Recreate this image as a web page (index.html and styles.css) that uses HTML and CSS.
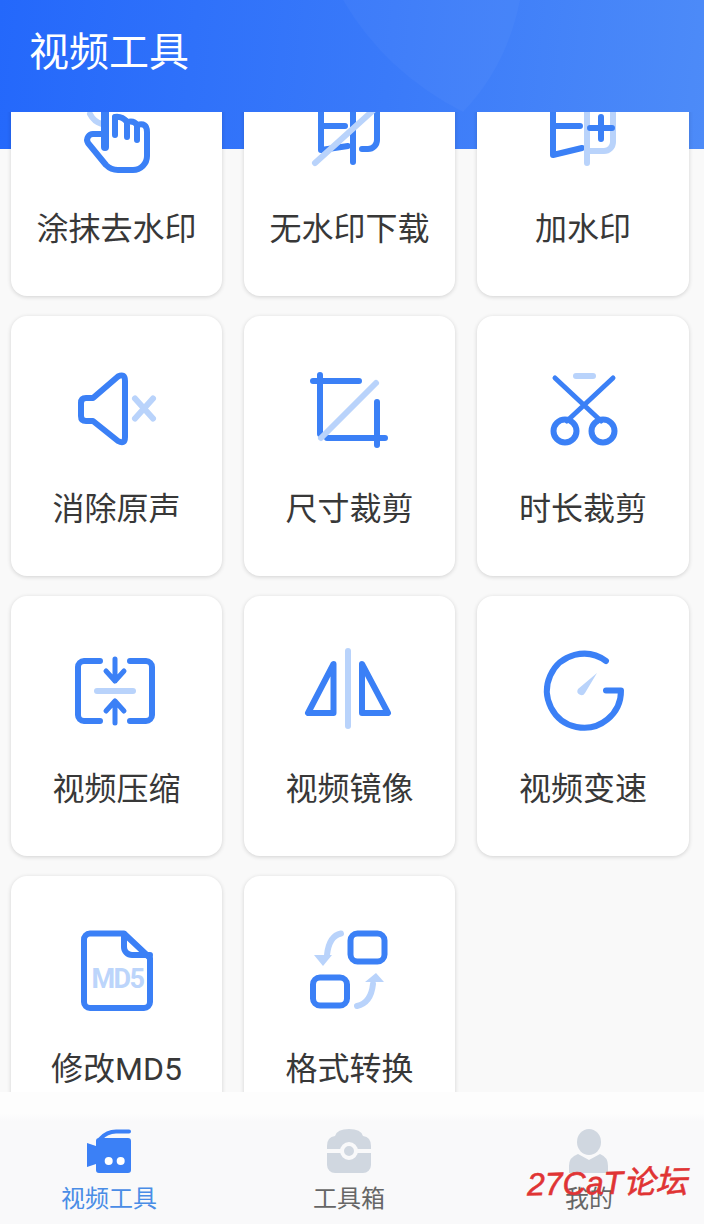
FILE: index.html
```html
<!DOCTYPE html>
<html lang="zh-CN">
<head>
<meta charset="utf-8">
<title>视频工具</title>
<link rel="stylesheet" href="styles.css">
</head>
<body>
<div class="screen">
  <header class="topbar">
    <svg class="topbar-shape" viewBox="0 0 704 112" aria-hidden="true"><path class="shape-fill" d="M343 0Q385 72 463 112Q507 66 520 0Z"/></svg>
    <h1 class="title">视频工具</h1>
  </header>
  <main class="content">
    <div class="grid">
      <a class="card">
        <svg class="icon" viewBox="77 89 80 80">
          <path class="l" d="M90 114Q94 122 102 124" />
          <path class="s" d="M104 134H94a6 6 0 0 0-6 9L106 165q5 5 12 5H133a14 14 0 0 0 14-14V132Q147 122 137 125Q134 120 127 122Q122 116 115 117M115 117V135M127 122V137M137 125V140"/>
          <path class="s thick" d="M105 100V147"/>
        </svg>
        <span class="label">涂抹去水印</span>
      </a>
      <a class="card">
        <svg class="icon" viewBox="310 89 80 80">
          <path class="s" d="M321 90V150L348 146M321 126H345M353 90V162M377 90V140a9 9 0 0 1-9 9H362"/>
          <path class="l" d="M315 163L378 106"/>
        </svg>
        <span class="label">无水印下载</span>
      </a>
      <a class="card">
        <svg class="icon" viewBox="543 89 80 80">
          <path class="s" d="M553 90V155L582 148M553 126H580"/>
          <path class="l" d="M587 90V163M613 90V142a9 9 0 0 1-9 9H590"/>
          <path class="s" d="M590 128H612M601 117V139"/>
        </svg>
        <span class="label">加水印</span>
      </a>
      <a class="card">
        <svg class="icon" viewBox="77 369 80 80">
          <path class="s" d="M118 376.500Q125 373 125 381V437Q125 445 118 441L93 421H86Q81 421 81 416V403Q81 398 86 398H93Z"/>
          <path class="l" d="M135 398.500L153 418.500M153 398.500L135 418.500"/>
        </svg>
        <span class="label">消除原声</span>
      </a>
      <a class="card">
        <svg class="icon" viewBox="310 369 80 80">
          <path class="s" d="M320 375V434M313 381H359M377 402V445M327 438H385"/>
          <path class="l" d="M321 438L376 383"/>
        </svg>
        <span class="label">尺寸裁剪</span>
      </a>
      <a class="card">
        <svg class="icon" viewBox="543 369 80 80">
          <path class="s t" d="M555 378L601 421M613 378L567 421"/>
          <circle class="s" cx="565" cy="431" r="11.500"/>
          <circle class="s" cx="603" cy="431" r="11.500"/>
          <path class="l" d="M576 376H593"/>
        </svg>
        <span class="label">时长裁剪</span>
      </a>
      <a class="card">
        <svg class="icon" viewBox="77 649 80 80">
          <path class="s" d="M100 661H84a6 6 0 0 0-6 6V715a6 6 0 0 0 6 6H100M130 661H146a6 6 0 0 1 6 6V715a6 6 0 0 1-6 6H130"/>
          <path class="l" d="M97 691H133"/>
          <path class="s t" d="M115 659V681M106 671L115 681L124 671M115 723V701M106 711L115 701L124 711"/>
        </svg>
        <span class="label">视频压缩</span>
      </a>
      <a class="card">
        <svg class="icon" viewBox="310 649 80 80">
          <path class="s j" d="M333.500 664L308 713H333.500ZM362 664L388 713H362Z"/>
          <path class="l" d="M348 651V726"/>
        </svg>
        <span class="label">视频镜像</span>
      </a>
      <a class="card">
        <svg class="icon" viewBox="543 649 80 80">
          <path class="s" d="M606 661A37 37 0 1 0 621 690.500H606"/>
          <path class="needle" d="M597 673L585 693a4 4 0 1 1-7-4Z"/>
        </svg>
        <span class="label">视频变速</span>
      </a>
      <a class="card">
        <svg class="icon" viewBox="77 929 80 80">
          <path class="s" d="M90 933.500H124L150 958V1002a6 6 0 0 1-6 6H90a6 6 0 0 1-6-6V940a6 6 0 0 1 6-6.500Z"/>
          <path class="s" d="M124 934V947a8 8 0 0 0 8 8H150"/>
          <text class="md5-mark" x="117.500" y="988" text-anchor="middle">MD5</text>
        </svg>
        <span class="label">修改MD5</span>
      </a>
      <a class="card">
        <svg class="icon" viewBox="310 929 80 80">
          <rect class="s" x="350.500" y="933.500" width="34" height="28" rx="7"/>
          <rect class="s" x="313" y="977.500" width="34" height="28" rx="7"/>
          <path class="l" d="M341 933.500Q329 936 327 955M357 1006Q371 1003 373 984"/>
          <path class="needle" d="M314 955H332L323 966ZM365 982H384L376 973Z"/>
        </svg>
        <span class="label">格式转换</span>
      </a>
    </div>
  </main>
  <nav class="tabbar">
    <a class="tab tab-active">
      <svg class="tab-icon" viewBox="84 1126 50 50">
        <path class="cam" d="M99 1138H128a3 3 0 0 1 3 3V1170a3 3 0 0 1-3 3H99a3 3 0 0 1-3-3V1164L87 1167V1143L96 1146V1141a3 3 0 0 1 3-3Z"/>
        <path class="cam-handle" d="M100 1139Q107 1131.500 116 1131.500H129"/>
        <circle class="dot" cx="108.700" cy="1161" r="4"/>
        <circle class="dot" cx="120.700" cy="1161" r="4"/>
      </svg>
      <span class="tab-label">视频工具</span>
    </a>
    <a class="tab">
      <svg class="tab-icon" viewBox="324 1126 50 50">
        <path class="grey" d="M335 1136Q337 1129 349 1129Q361 1129 363 1136Q371 1137 371 1146V1149H327V1146Q327 1137 335 1136ZM327 1153H371V1165a8 8 0 0 1-8 8H335a8 8 0 0 1-8-8Z"/>
        <circle class="ring" cx="349" cy="1151" r="7"/>
      </svg>
      <span class="tab-label">工具箱</span>
    </a>
    <a class="tab">
      <svg class="tab-icon" viewBox="564 1126 50 50">
        <ellipse class="grey" cx="589" cy="1142" rx="12" ry="13"/>
        <path class="grey" d="M569 1173V1166Q569 1157 578 1154L589 1160L600 1154Q608 1157 608 1166V1173Z"/>
      </svg>
      <span class="tab-label">我的</span>
    </a>
  </nav>
  <div class="watermark">27CaT论坛</div>
</div>
</body>
</html>
```
FILE: styles.css
```css
* { box-sizing: border-box; }
html, body { margin: 0; padding: 0; }
body { font-family: Roboto, "Noto Sans CJK SC", sans-serif; color: #333; }

.screen {
  position: relative;
  width: 704px;
  height: 1224px;
  display: flex;
  flex-direction: column;
  overflow: hidden;
  background: linear-gradient(96deg, #2468fb 0%, #3a7af9 55%, #4d8bf8 100%) 0 0 / 704px 149px no-repeat, #f9f9f9;
}

.topbar {
  position: relative;
  flex: 0 0 112px;
  display: flex;
  align-items: center;
  padding: 0 0 6px 29px;
}
.topbar-shape { position: absolute; left: 0; top: 0; width: 704px; height: 112px; }
.shape-fill { fill: #fff; opacity: .03; }
.title {
  position: relative;
  margin: 0;
  font-size: 40px;
  font-weight: 400;
  line-height: 56px;
  color: #fff;
}

.content { flex: 1 1 0; min-height: 0; overflow: hidden; }
.grid {
  display: grid;
  grid-template-columns: 211px 211px 212px;
  grid-auto-rows: 260px;
  gap: 20px 22px;
  margin-top: -76px;
  padding-left: 11px;
}
.card {
  display: flex;
  flex-direction: column;
  align-items: center;
  padding-top: 53px;
  background: #fff;
  border-radius: 16px;
  box-shadow: 0 1px 4px rgba(0, 0, 0, .16);
}
.icon { display: block; width: 80px; height: 80px; overflow: visible; }
.label { margin-top: 38px; font-size: 32px; line-height: 44px; color: #383838; white-space: nowrap; }

.s, .l { fill: none; stroke-linecap: round; stroke-linejoin: round; }
.s { stroke: #3b80f6; stroke-width: 6; }
.l { stroke: #b9d3fb; stroke-width: 6; }
.t { stroke-width: 5; }
.s.thick { stroke-width: 8; }
.needle { fill: #b9d3fb; }
.md5-mark { font-family: Roboto, sans-serif; font-size: 27px; font-weight: 700; letter-spacing: -1.500px; fill: #bcd5fb; }

.tabbar {
  flex: 0 0 132px;
  display: flex;
  justify-content: space-between;
  padding: 34px 67px 0 61px;
  background: linear-gradient(#fdfdfd 0, #fdfdfd 22px, #f9f9fa 30px);
}
.tab { width: 96px; display: flex; flex-direction: column; align-items: center; }
.tab-icon { display: block; width: 50px; height: 50px; }
.tab-label { margin-top: 7px; font-size: 24px; line-height: 32px; color: #666; white-space: nowrap; }
.tab-active .tab-label { color: #4a8de6; }
.cam { fill: #3b80f6; }
.cam-handle { fill: none; stroke: #3b80f6; stroke-width: 4; stroke-linecap: round; }
.dot { fill: #fff; }
.grey { fill: #d0d7e0; }
.ring { fill: #d0d7e0; stroke: #f9f9fa; stroke-width: 4; }

.watermark {
  position: absolute;
  left: 527px;
  top: 1161px;
  font-family: "Liberation Sans", "Noto Sans CJK SC", sans-serif;
  font-size: 32px;
  font-style: italic;
  line-height: 44px;
  color: #e03434;
  -webkit-text-stroke: .6px #e03434;
  white-space: nowrap;
  transform: rotate(-1deg);
}
```
